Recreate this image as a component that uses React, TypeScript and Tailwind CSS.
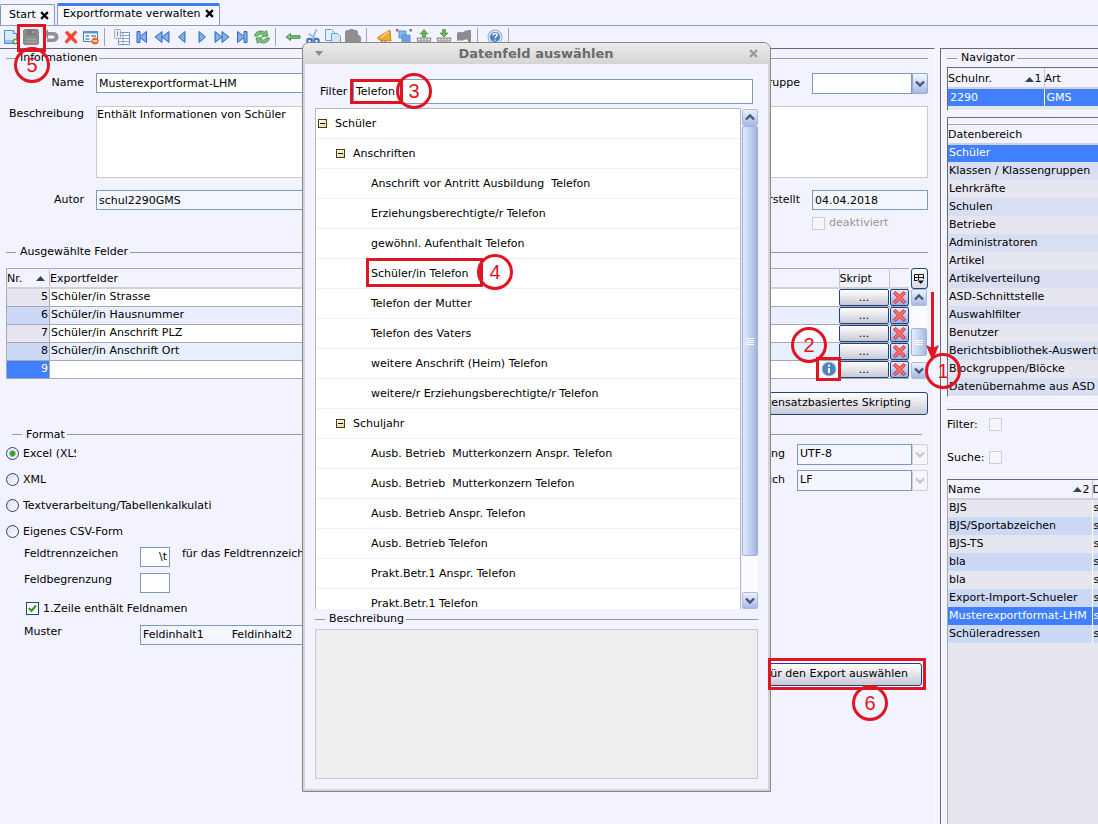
import type { ReactNode } from 'react'
import clsx from 'clsx'

const exportFields = [
  { nr: 5, name: 'Schüler/in Strasse' },
  { nr: 6, name: 'Schüler/in Hausnummer' },
  { nr: 7, name: 'Schüler/in Anschrift PLZ' },
  { nr: 8, name: 'Schüler/in Anschrift Ort' },
  { nr: 9, name: '' },
]

const dataAreas = [
  'Schüler',
  'Klassen / Klassengruppen',
  'Lehrkräfte',
  'Schulen',
  'Betriebe',
  'Administratoren',
  'Artikel',
  'Artikelverteilung',
  'ASD-Schnittstelle',
  'Auswahlfilter',
  'Benutzer',
  'Berichtsbibliothek-Auswertungen',
  'Blockgruppen/Blöcke',
  'Datenübernahme aus ASD',
]

const formats = [
  'BJS',
  'BJS/Sportabzeichen',
  'BJS-TS',
  'bla',
  'bla',
  'Export-Import-Schueler',
  'Musterexportformat-LHM',
  'Schüleradressen',
]

const tree = [
  { level: 0, label: 'Schüler' },
  { level: 1, label: 'Anschriften' },
  { level: 2, label: 'Anschrift vor Antritt Ausbildung  Telefon' },
  { level: 2, label: 'Erziehungsberechtigte/r Telefon' },
  { level: 2, label: 'gewöhnl. Aufenthalt Telefon' },
  { level: 2, label: 'Schüler/in Telefon' },
  { level: 2, label: 'Telefon der Mutter' },
  { level: 2, label: 'Telefon des Vaters' },
  { level: 2, label: 'weitere Anschrift (Heim) Telefon' },
  { level: 2, label: 'weitere/r Erziehungsberechtigte/r Telefon' },
  { level: 1, label: 'Schuljahr' },
  { level: 2, label: 'Ausb. Betrieb  Mutterkonzern Anspr. Telefon' },
  { level: 2, label: 'Ausb. Betrieb  Mutterkonzern Telefon' },
  { level: 2, label: 'Ausb. Betrieb Anspr. Telefon' },
  { level: 2, label: 'Ausb. Betrieb Telefon' },
  { level: 2, label: 'Prakt.Betr.1 Anspr. Telefon' },
  { level: 2, label: 'Prakt.Betr.1 Telefon' },
]

const field = 'border border-[#7b98bd] px-[2px] outline-none'

function Svg({ children, size = 16 }: { children: ReactNode; size?: number }) {
  return (
    <svg width={size} height={size} viewBox="0 0 16 16" fill="none" aria-hidden="true" className="shrink-0">
      {children}
    </svg>
  )
}

const blue = { fill: '#7db0f0', stroke: '#2f66c0', strokeWidth: 1 }

const toolbar: { label: string; icon: ReactNode }[][] = [
  [
    {
      label: 'Neu',
      icon: (
        <>
          <path d="M1.500 1.500h9l3 3v10h-12z" fill="#d7ebfc" stroke="#4a90d9" />
          <path d="M10.500 1.500v3h3" fill="#fff" stroke="#4a90d9" />
          <path d="M2 11h11v3H2z" fill="#8fc3f3" />
          <circle cx="12.500" cy="12.500" r="3" fill="#5a9e3c" />
          <path d="M12.500 10.800v3.400M10.800 12.500h3.400" stroke="#fff" strokeWidth="1.200" />
        </>
      ),
    },
    {
      label: 'Speichern',
      icon: (
        <>
          <path d="M1.500 0h13L16 1.500V14.500L14.500 16h-13L0 14.500v-13z" fill="#8b8b8b" />
          <path d="M4 0h8v6H4z" fill="#787878" />
          <path d="M2.500 9h11v5h-11z" fill="#9c9c9c" />
          <path d="M2.500 11.500h11" stroke="#8b8b8b" />
          <path d="M9.500 1.500h1.500v3H9.500z" fill="#b0b0b0" />
        </>
      ),
    },
    {
      label: 'Rückgängig',
      icon: <path d="M0 5L5 0v3h5.500a4.500 4.500 0 010 10H4V9.500h6a1.400 1.400 0 000-3H5V10z" fill="#919191" />,
    },
    {
      label: 'Löschen',
      icon: <path d="M2 3.500L4.500 2 8 5.500 12.500 1.500 14 3.500 10.300 7.800 14.500 13 12.500 14.500 8 10.500 3.500 14.500 1.800 12.500 5.500 8z" fill="#f4422f" stroke="#e9806f" strokeWidth="0.800" />,
    },
    {
      label: 'Formular zurücksetzen',
      icon: (
        <>
          <path d="M.5 2.500h14v10H.5z" fill="#fff" stroke="#4c7cc4" />
          <path d="M1 2h13v2.500H1z" fill="#5e93db" />
          <path d="M2.500 7h4M2.500 10h4M8 7h5" stroke="#5e86c0" strokeWidth="1.400" />
          <circle cx="12" cy="12" r="3.600" fill="#ed6b21" />
          <path d="M10 12h4" stroke="#fff" strokeWidth="1.400" />
        </>
      ),
    },
  ],
  [
    {
      label: 'Tabelle',
      icon: (
        <>
          <path d="M4.500 3.500h11v12h-11z" fill="#fff" stroke="#6e96c8" />
          <path d="M5 6.500h10M5 9.500h10M5 12.500h10M9 4v11" stroke="#7da4d4" />
          <rect x=".5" y=".5" width="6" height="9" rx="1" fill="#eee" stroke="#aaa" />
          <path d="M3.500 2.500v4.500" stroke="#888" />
        </>
      ),
    },
    { label: 'Erster', icon: <path d="M3 2.500h3v4.800L12.500 2.500v11L6 8.700v4.800H3z" {...blue} /> },
    { label: 'Schnell zurück', icon: <path d="M8 2.500v11L1 8zM15 2.500v11L8 8z" {...blue} /> },
    { label: 'Zurück', icon: <path d="M11 2.500v11L4.500 8z" {...blue} /> },
    { label: 'Weiter', icon: <path d="M5 2.500v11L11.500 8z" {...blue} /> },
    { label: 'Schnell weiter', icon: <path d="M1 2.500v11L8 8zM8 2.500v11L15 8z" {...blue} /> },
    { label: 'Letzter', icon: <path d="M3.500 2.500v11L10 8.700v4.800h3v-11h-3v4.800z" {...blue} /> },
    {
      label: 'Aktualisieren',
      icon: (
        <>
          <path d="M.5 7C1 2.500 6.500.5 11 3.200L12.500 1.500l1.500 5.500-6 .5 1.500-2C7.500 4.500 4.500 5 3.500 7.200z" fill="#7cc276" stroke="#3f8f4b" strokeWidth="0.800" />
          <path d="M15.500 9c-.5 4.500-6 6.500-10.500 3.800L3.500 14.500 2 9l6-.5-1.500 2c2 1 5 .5 6-1.700z" fill="#7cc276" stroke="#3f8f4b" strokeWidth="0.800" />
        </>
      ),
    },
  ],
  [
    { label: 'Zurück zur Liste', icon: <path d="M1 8l4.500-3.500v2.200h9.500v2.600H5.500v2.200z" fill="#7cc276" stroke="#3c8546" strokeWidth="0.900" /> },
    {
      label: 'Ausschneiden',
      icon: (
        <>
          <path d="M11.500 0L7 11M3.500 4.500L11 10" stroke="#9dbfe8" strokeWidth="2" />
          <circle cx="4.500" cy="12" r="2.300" stroke="#3b73bd" strokeWidth="2" />
          <circle cx="11.500" cy="12" r="2.300" stroke="#3b73bd" strokeWidth="2" />
        </>
      ),
    },
    {
      label: 'Kopieren',
      icon: (
        <>
          <path d="M.5 .5h6l3 3v8h-9z" fill="#e3f0fd" stroke="#6a9ede" />
          <path d="M6.500 4.500h6l3 3v8h-9z" fill="#d3e7fb" stroke="#6a9ede" />
        </>
      ),
    },
    {
      label: 'Einfügen',
      icon: <path d="M0 2.500L1.500 1H4l1-1h3l1 1h2.500L13 2.500V5l3 3v8H5v-2H0z" fill="#8f8f8f" />,
    },
  ],
  [
    {
      label: 'Hinweis',
      icon: (
        <>
          <path d="M14 1L15 12 3 11 1.500 8.500z" fill="#f0a836" stroke="#c9781c" strokeWidth="0.800" />
          <path d="M5 11l2 3 3-2" stroke="#c9781c" strokeWidth="1.500" />
          <path d="M12.500 3L5 8.500" stroke="#fbd98b" strokeWidth="1.500" />
        </>
      ),
    },
    {
      label: 'Anordnen',
      icon: (
        <>
          <path d="M3 2h7v7H3z" fill="#8db5ea" stroke="#5f90d4" />
          <path d="M6 6h8v8H6z" fill="#6d9fe4" stroke="#5f90d4" />
          <path d="M0 0h2.500v2.500H0zM13.500 0H16v2.500h-2.500z" fill="#777" />
        </>
      ),
    },
    {
      label: 'Aus Korb nehmen',
      icon: (
        <>
          <path d="M1 9h14l-1.500 6h-11z" fill="#ddd" stroke="#888" />
          <path d="M2 12h12M5 9v6M8 9v6M11 9v6" stroke="#999" />
          <path d="M8 .5l4 4.500H9.500v3h-3V5H4z" fill="#66b54f" stroke="#37803a" strokeWidth="0.600" />
        </>
      ),
    },
    {
      label: 'In Korb legen',
      icon: (
        <>
          <path d="M1 9h14l-1.500 6h-11z" fill="#ddd" stroke="#888" />
          <path d="M2 12h12M5 9v6M8 9v6M11 9v6" stroke="#999" />
          <path d="M8 8L4 4h2.500V.5h3V4H12z" fill="#66b54f" stroke="#37803a" strokeWidth="0.600" />
        </>
      ),
    },
    { label: 'Markieren', icon: <path d="M1 4c3-2 4 0 6-1s3-2 8-2v14h-3v-4c-2-1-3 0-5 .500S3 11 1 12z" fill="#8d8d8d" /> },
  ],
  [
    {
      label: 'Hilfe',
      icon: (
        <>
          <circle cx="8" cy="8" r="7" fill="#dbe9f9" stroke="#7ea5d3" />
          <circle cx="8" cy="8" r="5" fill="#4a80c6" />
          <path d="M6 6.500c0-2.600 4-2.600 4-.3C10 7.800 8 7.700 8 9.200M8 10.400v1.400" stroke="#fff" strokeWidth="1.400" />
        </>
      ),
    },
  ],
]

function Chevron({ up = false, color = '#43587d' }: { up?: boolean; color?: string }) {
  return (
    <svg width="10" height="7" viewBox="0 0 10 7" fill="none" aria-hidden="true">
      <path d={up ? 'M1 5.500L5 1.500 9 5.500' : 'M1 1.500L5 5.500 9 1.500'} stroke={color} strokeWidth="2.400" />
    </svg>
  )
}

function SortUp() {
  return (
    <svg width="9" height="5" viewBox="0 0 9 5" aria-hidden="true" className="mr-px">
      <path d="M0 5L4.500 0 9 5z" fill="#2c4360" />
    </svg>
  )
}

function CloseX({ color = '#000' }: { color?: string }) {
  return (
    <svg width="9" height="9" viewBox="0 0 8 8" aria-hidden="true">
      <path d="M1 1l6 6M7 1L1 7" stroke={color} strokeWidth="2" />
    </svg>
  )
}

function GroupTitle({ children }: { children: ReactNode }) {
  return (
    <div className="flex h-[18px] items-center whitespace-nowrap">
      <span className="mr-1 h-px w-[10px] bg-[#9a9a9f]" />
      <h2>{children}</h2>
      <span className="ml-[2px] h-px flex-1 bg-[#9a9a9f]" />
    </div>
  )
}

function ScrollButton({ up = false, label }: { up?: boolean; label: string }) {
  return (
    <button
      type="button"
      aria-label={label}
      className="flex h-[17px] w-4 shrink-0 items-center justify-center rounded-[2px] border border-[#a9bbe0] bg-linear-to-b from-[#eef2ff] to-[#a8b9e0]"
    >
      <Chevron up={up} />
    </button>
  )
}

function Dropdown({ id, value, disabled = false }: { id: string; value: string; disabled?: boolean }) {
  return (
    <div className="flex h-[21px]">
      <select
        id={id}
        disabled={disabled}
        className={clsx(field, 'min-w-0 flex-1 appearance-none opacity-100', disabled ? 'bg-[#f3f5ff]' : 'bg-white')}
      >
        <option>{value}</option>
      </select>
      <span
        className={clsx(
          'flex w-4 items-center justify-center rounded-r-[2px] border',
          disabled ? 'border-[#cfcfdc] bg-[#f5f5fa]' : 'border-[#8fa9d0] bg-linear-to-b from-[#f4f7ff] to-[#a8b9e0]',
        )}
      >
        <Chevron color={disabled ? '#c6c6d2' : undefined} />
      </span>
    </div>
  )
}

function FormatRadio({ label, checked = false, clip = false }: { label: string; checked?: boolean; clip?: boolean }) {
  return (
    <label className="flex h-[18px] items-center gap-1">
      <input
        type="radio"
        name="format"
        defaultChecked={checked}
        className="size-[13px] shrink-0 appearance-none rounded-full border border-[#24467a] bg-linear-to-br from-[#dcdce4] to-white checked:bg-[radial-gradient(circle,#2f9e2f_0_2px,#f2f2f8_4px)]"
      />
      <span className={clsx('overflow-hidden whitespace-nowrap', clip && 'w-[53px]')}>{label}</span>
    </label>
  )
}

function FadedCheckbox({ id }: { id: string }) {
  return (
    <input
      id={id}
      type="checkbox"
      className="size-[13px] shrink-0 appearance-none border border-[#cdcdd8] bg-[#f6f6f8]"
    />
  )
}

function Step({ n, className }: { n: number; className: string }) {
  return (
    <span
      className={clsx(
        'pointer-events-none absolute z-30 flex size-[36px] items-center justify-center rounded-full border-3 border-[#e01422] font-["Liberation_Sans",sans-serif] text-[20px] leading-none text-[#e01422]',
        className,
      )}
    >
      {n}
    </span>
  )
}

function Frame({ className }: { className: string }) {
  return <span className={clsx('pointer-events-none absolute z-30 border-3 border-[#e01422]', className)} />
}

function Toolbar() {
  return (
    <div className="flex h-[22px] items-center pl-px" role="toolbar">
      {toolbar.map((group, i) => (
        <div key={i} className="flex items-center">
          {group.map((item) => (
            <button key={item.label} type="button" aria-label={item.label} className="flex w-5 justify-center">
              <Svg>{item.icon}</Svg>
            </button>
          ))}
          <span className="mr-[7px] ml-[3px] h-[18px] w-px bg-[#a0a4b0]" />
        </div>
      ))}
    </div>
  )
}

function ExportTable() {
  return (
    <div className="mt-[7px] flex">
      <table className="min-w-0 flex-1 table-fixed border-collapse border-l border-[#a9a9b4]">
        <colgroup>
          <col className="w-[43px]" />
          <col />
          <col className="w-[50px]" />
          <col className="w-5" />
        </colgroup>
        <thead>
          <tr className="h-[19px] border-t border-b-2 border-t-[#a9a9b4] border-b-[#d0d0d8] text-left align-bottom">
            <th className="p-0 font-normal">
              <span className="flex items-center justify-between pr-[3px]">
                Nr. <SortUp />
              </span>
            </th>
            <th className="border-l border-[#c4c4cc] p-0 font-normal">Exportfelder</th>
            <th className="border-l border-[#c4c4cc] p-0 font-normal">Skript</th>
            <th className="border-l border-[#c4c4cc] p-0" />
          </tr>
        </thead>
        <tbody>
          {exportFields.map((row) => (
            <tr key={row.nr} className={clsx('h-[18px] border-b border-[#a9a9b4]', row.nr % 2 ? 'bg-white' : 'bg-[#e9effe]')}>
              <td
                className={clsx(
                  'p-0 pr-px text-right',
                  row.nr === 9 ? 'bg-[#4080ff] text-white' : row.nr % 2 ? 'bg-[#e6e6f0]' : 'bg-[#cbd9f6]',
                )}
              >
                {row.nr}
              </td>
              <td className="border-l border-[#a9a9b4] p-0 pl-px">
                <span className="flex items-center justify-between pr-[2px]">
                  {row.name}
                  {row.nr === 9 && (
                    <button type="button" aria-label="Datenfeld auswählen" className="ml-auto">
                      <Svg>
                        <circle cx="8" cy="8" r="7" fill="#4f86bd" stroke="#a9bfd6" />
                        <path d="M8 7v5M8 3.800v2" stroke="#fff" strokeWidth="2" />
                      </Svg>
                    </button>
                  )}
                </span>
              </td>
              <td className="p-0">
                <button
                  type="button"
                  className="block h-[17px] w-full rounded-[2px] border border-[#1f437a] bg-linear-to-b from-white to-[#c9c9d6] leading-[15px]"
                >
                  ...
                </button>
              </td>
              <td className="p-0 pl-px">
                <button
                  type="button"
                  aria-label="Feld entfernen"
                  className="flex h-[17px] w-full items-center justify-center rounded-[2px] border border-[#1f437a] bg-linear-to-b from-[#e4ecff] to-[#8fb0f0]"
                >
                  <Svg size={15}>
                    <path d="M1.500 3.500L4 1.500 8 5.500 12.500 1.500 14.500 3.500 10.500 8 14.500 12.500 12.500 14.500 8 10.500 3.500 14.500 1.500 12.500 5.500 8z" fill="#fb6d68" stroke="#e0282b" />
                  </Svg>
                </button>
              </td>
            </tr>
          ))}
        </tbody>
      </table>
      <div className="ml-px flex w-[18px] flex-col items-center">
        <button
          type="button"
          aria-label="Spalten wählen"
          className="flex h-[21px] w-[17px] items-center justify-center rounded-[3px] border border-[#1f437a] bg-linear-to-b from-white to-[#d9d9e4]"
        >
          <svg width="10" height="10" viewBox="0 0 10 10" fill="none" aria-hidden="true">
            <path d="M.5 7V.5h9V5M0 3.500h9.500M4.500 0v6M.5 6.500h3" stroke="#111" />
            <path d="M3.500 6.500h6.500L6.800 10z" fill="#111" />
          </svg>
        </button>
        <ScrollButton up label="Nach oben" />
        <div className="flex w-4 flex-1 flex-col items-center bg-[#fbfbff] pt-[22px]">
          <span className="flex h-7 w-4 flex-col items-center justify-center gap-px rounded-[2px] border border-[#9fb3de] bg-linear-to-r from-[#e6edff] to-[#a9bae2]">
            <span className="h-px w-2 bg-white" />
            <span className="h-px w-2 bg-white" />
            <span className="h-px w-2 bg-white" />
          </span>
        </div>
        <ScrollButton label="Nach unten" />
      </div>
    </div>
  )
}

function Editor() {
  return (
    <main className="min-w-0 flex-1 border-t border-r border-t-[#6c6c70] border-r-white pr-[6px] pl-[6px]">
      <GroupTitle>Informationen</GroupTitle>
      <div className="mt-[6px] grid grid-cols-[78px_1fr_140px_116px] gap-x-3">
        <label htmlFor="name" className="text-right leading-5">Name</label>
        <input id="name" defaultValue="Musterexportformat-LHM" className={clsx(field, 'h-5 bg-white')} />
        <label htmlFor="gruppe" className="text-right leading-5">Gruppe</label>
        <Dropdown id="gruppe" value="" />
      </div>
      <div className="mt-3 grid grid-cols-[78px_1fr] gap-x-3">
        <label htmlFor="beschreibung" className="text-right leading-4">Beschreibung</label>
        <textarea
          id="beschreibung"
          defaultValue="Enthält Informationen von Schüler"
          className="h-[72px] resize-none border border-[#c9c9d2] bg-white leading-4 outline-none"
        />
      </div>
      <div className="mt-3 grid grid-cols-[78px_1fr_140px_116px] gap-x-3">
        <label htmlFor="autor" className="text-right leading-5">Autor</label>
        <input id="autor" readOnly value="schul2290GMS" className={clsx(field, 'h-5 bg-[#f3f5ff]')} />
        <label htmlFor="erstellt" className="text-right leading-5">Erstellt</label>
        <input id="erstellt" readOnly value="04.04.2018" className={clsx(field, 'h-5 bg-[#f3f5ff]')} />
      </div>
      <div className="mt-[5px] flex justify-end">
        <label className="flex h-4 w-[116px] items-center gap-1 text-[#96969b]">
          <input type="checkbox" disabled className="size-[13px] appearance-none border border-[#cdcdd8] bg-[#f6f6f8]" />
          deaktiviert
        </label>
      </div>

      <div className="mt-3">
        <GroupTitle>Ausgewählte Felder</GroupTitle>
      </div>
      <ExportTable />
      <div className="mt-[13px] flex justify-end">
        <button
          type="button"
          className="h-[23px] rounded-[3px] border border-[#1f437a] bg-linear-to-b from-white to-[#c9c9d6] px-4"
        >
          Datensatzbasiertes Skripting
        </button>
      </div>

      <div className="mx-[6px] mt-[11px]">
        <GroupTitle>Format</GroupTitle>
      </div>
      <div className="flex justify-between">
        <div className="pt-px">
          <div className="flex flex-col gap-2">
            <FormatRadio label="Excel (XLSX)" checked clip />
            <FormatRadio label="XML" />
            <FormatRadio label="Textverarbeitung/Tabellenkalkulati" />
            <FormatRadio label="Eigenes CSV-Form" />
          </div>
          <div className="mt-[6px] grid grid-cols-[104px_30px_1fr] gap-x-3 gap-y-[6px] pl-[18px] leading-[14px]">
            <label htmlFor="trenner">Feldtrennzeichen</label>
            <input id="trenner" defaultValue="\t" className={clsx(field, 'h-5 bg-white text-right')} />
            <span>für das Feldtrennzeichen</span>
            <label htmlFor="begrenzung">Feldbegrenzung</label>
            <input id="begrenzung" className={clsx(field, 'col-span-2 h-5 w-[30px] bg-white')} />
          </div>
          <label className="mt-2 ml-5 flex h-4 items-center gap-1">
            <span className="relative flex size-[13px]">
              <input type="checkbox" defaultChecked className="size-[13px] appearance-none border border-[#24467a] bg-white" />
              <svg width="9" height="9" viewBox="0 0 9 9" fill="none" aria-hidden="true" className="absolute top-[2px] left-[2px]">
                <path d="M1 4l2.500 3L8 1.500" stroke="#27962b" strokeWidth="2" />
              </svg>
            </span>
            1.Zeile enthält Feldnamen
          </label>
          <div className="mt-2 grid grid-cols-[104px_260px] gap-x-3 pl-[18px] leading-[14px]">
            <label htmlFor="muster">Muster</label>
            <div className="flex h-5 items-center gap-7 border border-[#7b98bd] bg-[#f3f5ff] px-[2px]">
              <output id="muster">Feldinhalt1</output>
              <output>Feldinhalt2</output>
            </div>
          </div>
        </div>
        <div className="grid h-fit grid-cols-[130px_131px] gap-x-3 gap-y-[5px]">
          <label htmlFor="kodierung" className="text-right leading-5">Zeichenkodierung</label>
          <Dropdown id="kodierung" value="UTF-8" disabled />
          <label htmlFor="umbruch" className="text-right leading-5">Zeilenumbruch</label>
          <Dropdown id="umbruch" value="LF" disabled />
        </div>
      </div>
      <div className="mt-[18px] mr-[6px] flex justify-end">
        <button
          type="button"
          className="h-[23px] rounded-[3px] border border-[#1f437a] bg-linear-to-b from-white to-[#c9c9d6] px-[13px]"
        >
          Felder für den Export auswählen
        </button>
      </div>
    </main>
  )
}

function Navigator() {
  return (
    <aside className="flex w-[158px] shrink-0 flex-col overflow-hidden border-t border-l border-[#6c6c70] pl-[6px] leading-4 whitespace-nowrap">
      <div className="-mr-1">
        <GroupTitle>Navigator</GroupTitle>
      </div>
      <div className="border-t border-b border-l border-t-[#6c6c70] border-b-white border-l-[#6c6c70] bg-[#e6e6f0]">
        <table className="w-full table-fixed border-collapse bg-[#f3f3ff]">
          <thead>
            <tr className="h-5 border-b-2 border-[#d0d0d8] text-left align-bottom">
              <th className="w-24 p-0 font-normal">
                <span className="flex items-center pr-[2px]">
                  <span className="flex-1">Schulnr.</span>
                  <SortUp />1
                </span>
              </th>
              <th className="border-l border-[#c4c4cc] p-0 font-normal">Art</th>
            </tr>
          </thead>
          <tbody>
            <tr className="h-[18px] bg-[#4080ff] text-white">
              <td className="p-0 pl-[2px]">2290</td>
              <td className="border-l border-white p-0 pl-[2px]">GMS</td>
            </tr>
          </tbody>
        </table>
        <div className="h-1" />
      </div>
      <div className="mt-[6px] border-t border-b border-l border-t-[#6c6c70] border-b-white border-l-[#6c6c70]">
        <table className="mt-[6px] w-full table-fixed border-collapse">
          <thead>
            <tr className="h-[19px] border-t border-b-2 border-t-[#a9a9b4] border-b-[#d0d0d8] text-left align-bottom">
              <th className="p-0 font-normal">Datenbereich</th>
            </tr>
          </thead>
          <tbody>
            {dataAreas.map((area, i) => (
              <tr
                key={area}
                className={clsx('h-[18px]', i === 0 ? 'bg-[#4080ff] text-white' : i % 2 ? 'bg-[#d8dff3]' : 'bg-[#e6e6f0]')}
              >
                <td className="overflow-hidden p-0 pl-px">{area}</td>
              </tr>
            ))}
          </tbody>
        </table>
      </div>
      <div className="mt-[6px] border-t border-white" />
      <div className="mt-[5px] border-t border-[#6c6c70] pt-[6px]">
        <div className="grid grid-cols-[38px_1fr] items-center gap-x-1 gap-y-[17px] py-px">
          <label htmlFor="filter">Filter:</label>
          <FadedCheckbox id="filter" />
          <label htmlFor="suche">Suche:</label>
          <FadedCheckbox id="suche" />
        </div>
      </div>
      <div className="mt-[6px] border-t border-white" />
      <div className="mt-[5px] flex-1 border-t border-l border-t-[#6c6c70] border-l-[#a9a9b4] bg-[#e6e6f0]">
        <table className="w-full table-fixed border-collapse">
          <thead>
            <tr className="h-[19px] border-b-2 border-[#d0d0d8] bg-[#f3f3ff] text-left align-bottom">
              <th className="w-36 p-0 font-normal">
                <span className="flex items-center pr-[2px]">
                  <span className="flex-1">Name</span>
                  <SortUp />2
                </span>
              </th>
              <th className="overflow-hidden border-l border-[#c4c4cc] p-0 font-normal">D</th>
            </tr>
          </thead>
          <tbody>
            {formats.map((name, i) => (
              <tr
                key={i}
                className={clsx('h-[18px]', i === 6 ? 'bg-[#4080ff] text-white' : i % 2 ? 'bg-[#cbd9f6]' : 'bg-[#e6e6f0]')}
              >
                <td className="p-0 pl-px">{name}</td>
                <td className="overflow-hidden border-l border-white p-0 pl-px">s</td>
              </tr>
            ))}
          </tbody>
        </table>
      </div>
    </aside>
  )
}

function FieldDialog() {
  return (
    <section
      role="dialog"
      aria-labelledby="dialog-title"
      className="absolute top-[42px] left-[302px] z-20 w-[469px] rounded-t-[7px] border border-[#868686] bg-[#d4d4d4]"
    >
      <header className="flex h-[21px] items-center justify-between rounded-t-[6px] bg-linear-to-b from-[#ebebeb] to-[#d4d4d4] px-3">
        <button type="button" aria-label="Fenstermenü">
          <svg width="8" height="5" viewBox="0 0 8 5" aria-hidden="true">
            <path d="M0 0h8L4 5z" fill="#8a8a8a" />
          </svg>
        </button>
        <h1 id="dialog-title" className="text-[13px] font-bold text-[#6b6b6b]">Datenfeld auswählen</h1>
        <button type="button" aria-label="Schließen">
          <CloseX color="#9a9a9a" />
        </button>
      </header>
      <div className="mx-[2px] mb-[2px] bg-[#f3f3ff] px-[10px] pt-[15px] pb-[10px]">
        <div className="flex items-center pr-[5px] pl-[5px]">
          <label htmlFor="feldfilter" className="w-[33px]">Filter</label>
          <input id="feldfilter" defaultValue="Telefon" className={clsx(field, 'h-[25px] min-w-0 flex-1 bg-white')} />
        </div>
        <div className="mt-1 flex h-[501px] gap-px">
          <ul className="flex-1 overflow-hidden border-t border-r border-l border-[#b5b5bd] bg-white">
            {tree.map((node) => (
              <li
                key={node.label}
                className={clsx(
                  'flex h-[30px] items-center border-b border-[#f0f0fc] whitespace-pre',
                  node.level === 0 && 'pl-[2px]',
                  node.level === 1 && 'pl-5',
                  node.level === 2 && 'pl-[55px]',
                )}
              >
                {node.level < 2 && (
                  <button type="button" aria-label="Zuklappen" className="mr-2 flex size-[9px] items-center justify-center border border-[#4a3c10] bg-linear-to-br from-white to-[#e6d690]">
                    <span className="h-px w-[5px] bg-black" />
                  </button>
                )}
                {node.label}
              </li>
            ))}
          </ul>
          <div className="flex w-4 flex-col bg-[#fcfcfe] pt-px">
            <ScrollButton up label="Nach oben" />
            <span className="flex h-[430px] flex-col items-center justify-center gap-px rounded-[2px] border border-[#9fb3de] bg-linear-to-r from-[#dfe8ff] via-[#c3d1f6] to-[#a4b3da]">
              <span className="h-px w-2 bg-white" />
              <span className="h-px w-2 bg-white" />
              <span className="h-px w-2 bg-white" />
              <span className="h-px w-2 bg-white" />
            </span>
            <span className="flex-1" />
            <ScrollButton label="Nach unten" />
          </div>
        </div>
        <div className="mt-px">
          <GroupTitle>Beschreibung</GroupTitle>
        </div>
        <textarea
          readOnly
          aria-label="Beschreibung des Datenfelds"
          className="mt-px block h-[150px] w-full resize-none border border-[#c9c9d2] bg-[#eeeeee] outline-none"
        />
      </div>
    </section>
  )
}

export default function App() {
  return (
    <div className='relative flex min-h-screen flex-col overflow-hidden bg-[#f3f3ff] font-["DejaVu_Sans",sans-serif] text-[11px] leading-4 text-black'>
      <nav className="flex h-[26px] items-end gap-[2px] border-b border-[#8f9fc0]">
        <div className="flex h-[21px] items-center gap-1 rounded-t-[2px] border border-b-0 border-[#8099c0] bg-[#f5f7ff] pr-[5px] pl-2">
          <a href="#start">Start</a>
          <button type="button" aria-label="Start schließen">
            <CloseX />
          </button>
        </div>
        <div className="flex h-[22px] items-center gap-1 rounded-t-[2px] border border-t-3 border-b-0 border-[#8099c0] border-t-[#3f7cf5] bg-[#f5f7ff] pr-[5px] pb-1 pl-[5px]">
          <a href="#exportformate">Exportformate verwalten</a>
          <button type="button" aria-label="Exportformate verwalten schließen">
            <CloseX />
          </button>
        </div>
      </nav>
      <Toolbar />
      <div className="flex flex-1 gap-[5px]">
        <Editor />
        <Navigator />
      </div>

      <FieldDialog />

      <Frame className="top-6 left-[17px] h-7 w-[29px]" />
      <Step n={5} className="top-[47px] left-[14px]" />
      <Frame className="top-[79px] left-[350px] h-[25px] w-[53px]" />
      <Step n={3} className="top-[73px] left-[396px]" />
      <Frame className="top-[258px] left-[366px] h-[29px] w-[117px]" />
      <Step n={4} className="top-[254px] left-[477px]" />
      <Frame className="top-[357px] left-[816px] h-6 w-[25px]" />
      <Step n={2} className="top-[327px] left-[791px]" />
      <Frame className="top-[658px] left-[768px] h-[32px] w-[158px]" />
      <Step n={6} className="top-[685px] left-[852px]" />
      <svg width="14" height="70" viewBox="0 0 14 70" aria-hidden="true" className="pointer-events-none absolute top-[292px] left-[926px] z-30">
        <path d="M6.500 0v60" stroke="#e01422" strokeWidth="3" />
        <path d="M0 53l6.500 3L13 53 6.500 69z" fill="#e01422" />
      </svg>
      <Step n={1} className="top-[353px] left-[925px]" />
    </div>
  )
}
